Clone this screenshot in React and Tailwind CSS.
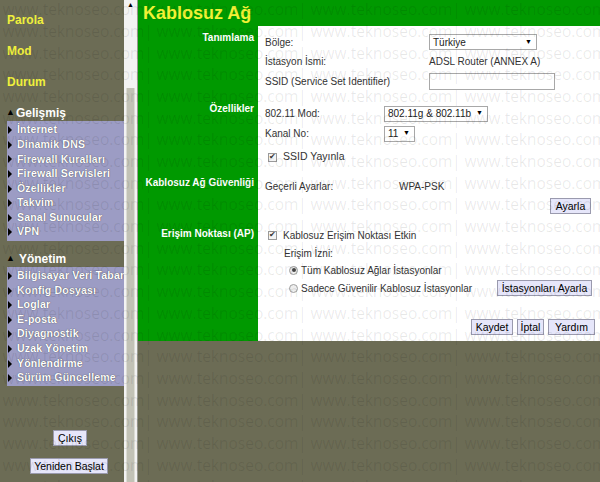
import React from 'react'

const advanced = ['İnternet', 'Dinamik DNS', 'Firewall Kuralları', 'Firewall Servisleri', 'Özellikler', 'Takvim', 'Sanal Sunucular', 'VPN']
const management = ['Bilgisayar Veri Tabanı', 'Konfig Dosyası', 'Loglar', 'E-posta', 'Diyagnostik', 'Uzak Yönetim', 'Yönlendirme', 'Sürüm Güncelleme']

function MenuBox({ items }) {
  return (
    <div className="ml-[7px] bg-[#9c9cc4] pt-[2px] pb-[1px] overflow-hidden">
      {items.map(item => (
        <div key={item} className="flex items-center h-[14.6px] whitespace-nowrap">
          <span className="w-0 h-0 border-y-[4px] border-y-transparent border-l-[4px] border-l-black ml-[1px] mr-[5px]" />
          <span className="text-white font-bold text-[10.5px] tracking-[0.2px] [text-shadow:0_0_1px_#333]">{item}</span>
        </div>
      ))}
    </div>
  )
}

function Btn({ children, className = '' }) {
  return (
    <button className={`bg-[#e6e6fa] border border-[#9a9aae] text-black text-[10.5px] leading-none px-0 whitespace-nowrap flex items-center justify-center ${className}`}>
      {children}
    </button>
  )
}

function Select({ value, className = '' }) {
  return (
    <div className={`h-[16px] bg-white border border-[#a8a8a8] flex items-center justify-between pl-[3px] pr-[4px] ${className}`}>
      <span className="text-[10px] text-[#222] whitespace-nowrap">{value}</span>
      <span className="text-[7px] text-black">▼</span>
    </div>
  )
}

function Check() {
  return (
    <span className="w-[9px] h-[9px] border border-[#9a9a9a] bg-[#f4f4f4] flex items-center justify-center text-[8px] leading-none text-[#333]">✔</span>
  )
}

function Radio({ checked }) {
  return (
    <span className="w-[9px] h-[9px] rounded-full border border-[#a0a0a0] bg-[#eeeeee] flex items-center justify-center">
      {checked && <span className="w-[4px] h-[4px] rounded-full bg-[#444]" />}
    </span>
  )
}

function Watermark() {
  const rows = Array.from({ length: 23 })
  const cols = Array.from({ length: 5 })
  return (
    <div className="absolute inset-0 overflow-hidden pointer-events-none">
      <div className="absolute top-[-1px] left-[-10px]">
        {rows.map((_, r) => (
          <div key={r} className="flex h-[21.7px] items-center">
            {cols.map((_, c) => (
              <span key={c} className="w-[154px] shrink-0 whitespace-nowrap text-[15.5px] text-black/[0.09] font-['Open_Sans',sans-serif]">
                | www.teknoseo.com
              </span>
            ))}
          </div>
        ))}
      </div>
    </div>
  )
}

export default function App() {
  return (
    <div className="relative w-[600px] h-[482px] overflow-hidden flex bg-[#6c6c55] font-['Liberation_Sans',Arial,sans-serif]">
      {/* sidebar */}
      <div className="w-[124px] shrink-0 flex flex-col pt-[4px]">
        {['Parola', 'Mod', 'Durum'].map(t => (
          <div key={t} className="h-[31.3px] flex items-center pl-[7px] text-[12px] font-bold text-[#f0f03c]">{t}</div>
        ))}
        <div className="mt-[7px] h-[16px] flex items-center pl-[6px] text-white font-bold text-[12px]">
          <span className="text-[9px] text-black mr-[1px]">▲</span>Gelişmiş
        </div>
        <MenuBox items={advanced} />
        <div className="mt-[10px] h-[16px] flex items-center pl-[6px] text-white font-bold text-[12px]">
          <span className="text-[9px] text-black mr-[4px]">▲</span>Yönetim
        </div>
        <MenuBox items={management} />
        <div className="flex justify-center pl-[16px] mt-[44px]">
          <Btn className="h-[16px] w-[34px]">Çıkış</Btn>
        </div>
        <div className="flex justify-center pl-[14px] mt-[12px]">
          <Btn className="h-[16px] w-[78px]">Yeniden Başlat</Btn>
        </div>
      </div>

      {/* scrollbar */}
      <div className="w-[13px] shrink-0 bg-[#f3f3f3] flex flex-col items-center">
        <span className="text-[7px] leading-none text-black mt-[1px]">▲</span>
        <div className="mt-[80px] flex-1 w-[9px] bg-[#c2c2b6] border-x border-[#dcdcd4]" />
      </div>
      <div className="w-[1px] shrink-0 bg-[#9a9a90]" />

      {/* main */}
      <div className="flex-1 flex flex-col">
        <div className="h-[26px] bg-[#009900] flex items-center pl-[5px]">
          <h1 className="text-[18px] font-bold text-[#f2f236] leading-none">Kablosuz Ağ</h1>
        </div>
        <div className="flex h-[315px]">
          <div className="w-[120px] shrink-0 bg-[#009900] flex flex-col items-end pr-[4px] pt-[4px] text-white font-bold text-[10px]">
            <div className="h-[14px] flex items-center">Tanımlama</div>
            <div className="h-[14px] flex items-center mt-[57px]">Özellikler</div>
            <div className="h-[14px] flex items-center mt-[60px]">Kablosuz Ağ Güvenliği</div>
            <div className="h-[14px] flex items-center mt-[37px]">Erişim Noktası (AP)</div>
          </div>
          <div className="flex-1 bg-white flex flex-col pl-[7px] pt-[8px] text-[10px] text-[#333]">
            <div className="h-[16px] flex items-center">
              <span className="w-[164px]">Bölge:</span>
              <Select value="Türkiye" className="w-[108px]" />
            </div>
            <div className="h-[16px] flex items-center mt-[3px]">
              <span className="w-[164px]">İstasyon İsmi:</span>
              <span>ADSL Router (ANNEX A)</span>
            </div>
            <div className="h-[17px] flex items-center mt-[4px]">
              <span className="w-[164px]">SSID (Service Set Identifier)</span>
              <div className="w-[126px] h-[17px] border border-[#a8a8a8] bg-white" />
            </div>
            <div className="h-[17px] flex items-center mt-[15px]">
              <span className="w-[119px]">802.11 Mod:</span>
              <Select value="802.11g & 802.11b" className="w-[104px]" />
            </div>
            <div className="h-[17px] flex items-center mt-[3px]">
              <span className="w-[119px]">Kanal No:</span>
              <Select value="11" className="w-[31px]" />
            </div>
            <div className="h-[16px] flex items-center mt-[7px] pl-[3px] gap-[6px]">
              <Check />
              <span className="text-[10.5px]">SSID Yayınla</span>
            </div>
            <div className="h-[16px] flex items-center mt-[13px]">
              <span className="w-[134px]">Geçerli Ayarlar:</span>
              <span>WPA-PSK</span>
            </div>
            <div className="h-[16px] flex justify-end pr-[9px] mt-[4px]">
              <Btn className="h-[16px] w-[41px]">Ayarla</Btn>
            </div>
            <div className="h-[16px] flex items-center mt-[13px] pl-[3px] gap-[6px]">
              <Check />
              <span>Kablosuz Erişim Noktası Etkin</span>
            </div>
            <div className="h-[16px] flex items-center mt-[2px] pl-[19px]">Erişim İzni:</div>
            <div className="h-[16px] flex items-center mt-[1px] pl-[24px] gap-[3px]">
              <Radio checked />
              <span>Tüm Kablosuz Ağlar İstasyonlar</span>
            </div>
            <div className="h-[18px] flex items-center mt-[1px] pl-[24px] gap-[3px] pr-[8px]">
              <Radio />
              <span className="flex-1">Sadece Güvenilir Kablosuz İstasyonlar</span>
              <Btn className="h-[16px] w-[95px]">İstasyonları Ayarla</Btn>
            </div>
            <div className="h-[16px] flex justify-end gap-[4px] pr-[5px] mt-[22px]">
              <Btn className="h-[16px] w-[42px]">Kaydet</Btn>
              <Btn className="h-[16px] w-[27px]">İptal</Btn>
              <Btn className="h-[16px] w-[47px]">Yardım</Btn>
            </div>
          </div>
        </div>
      </div>

      <Watermark />
    </div>
  )
}
